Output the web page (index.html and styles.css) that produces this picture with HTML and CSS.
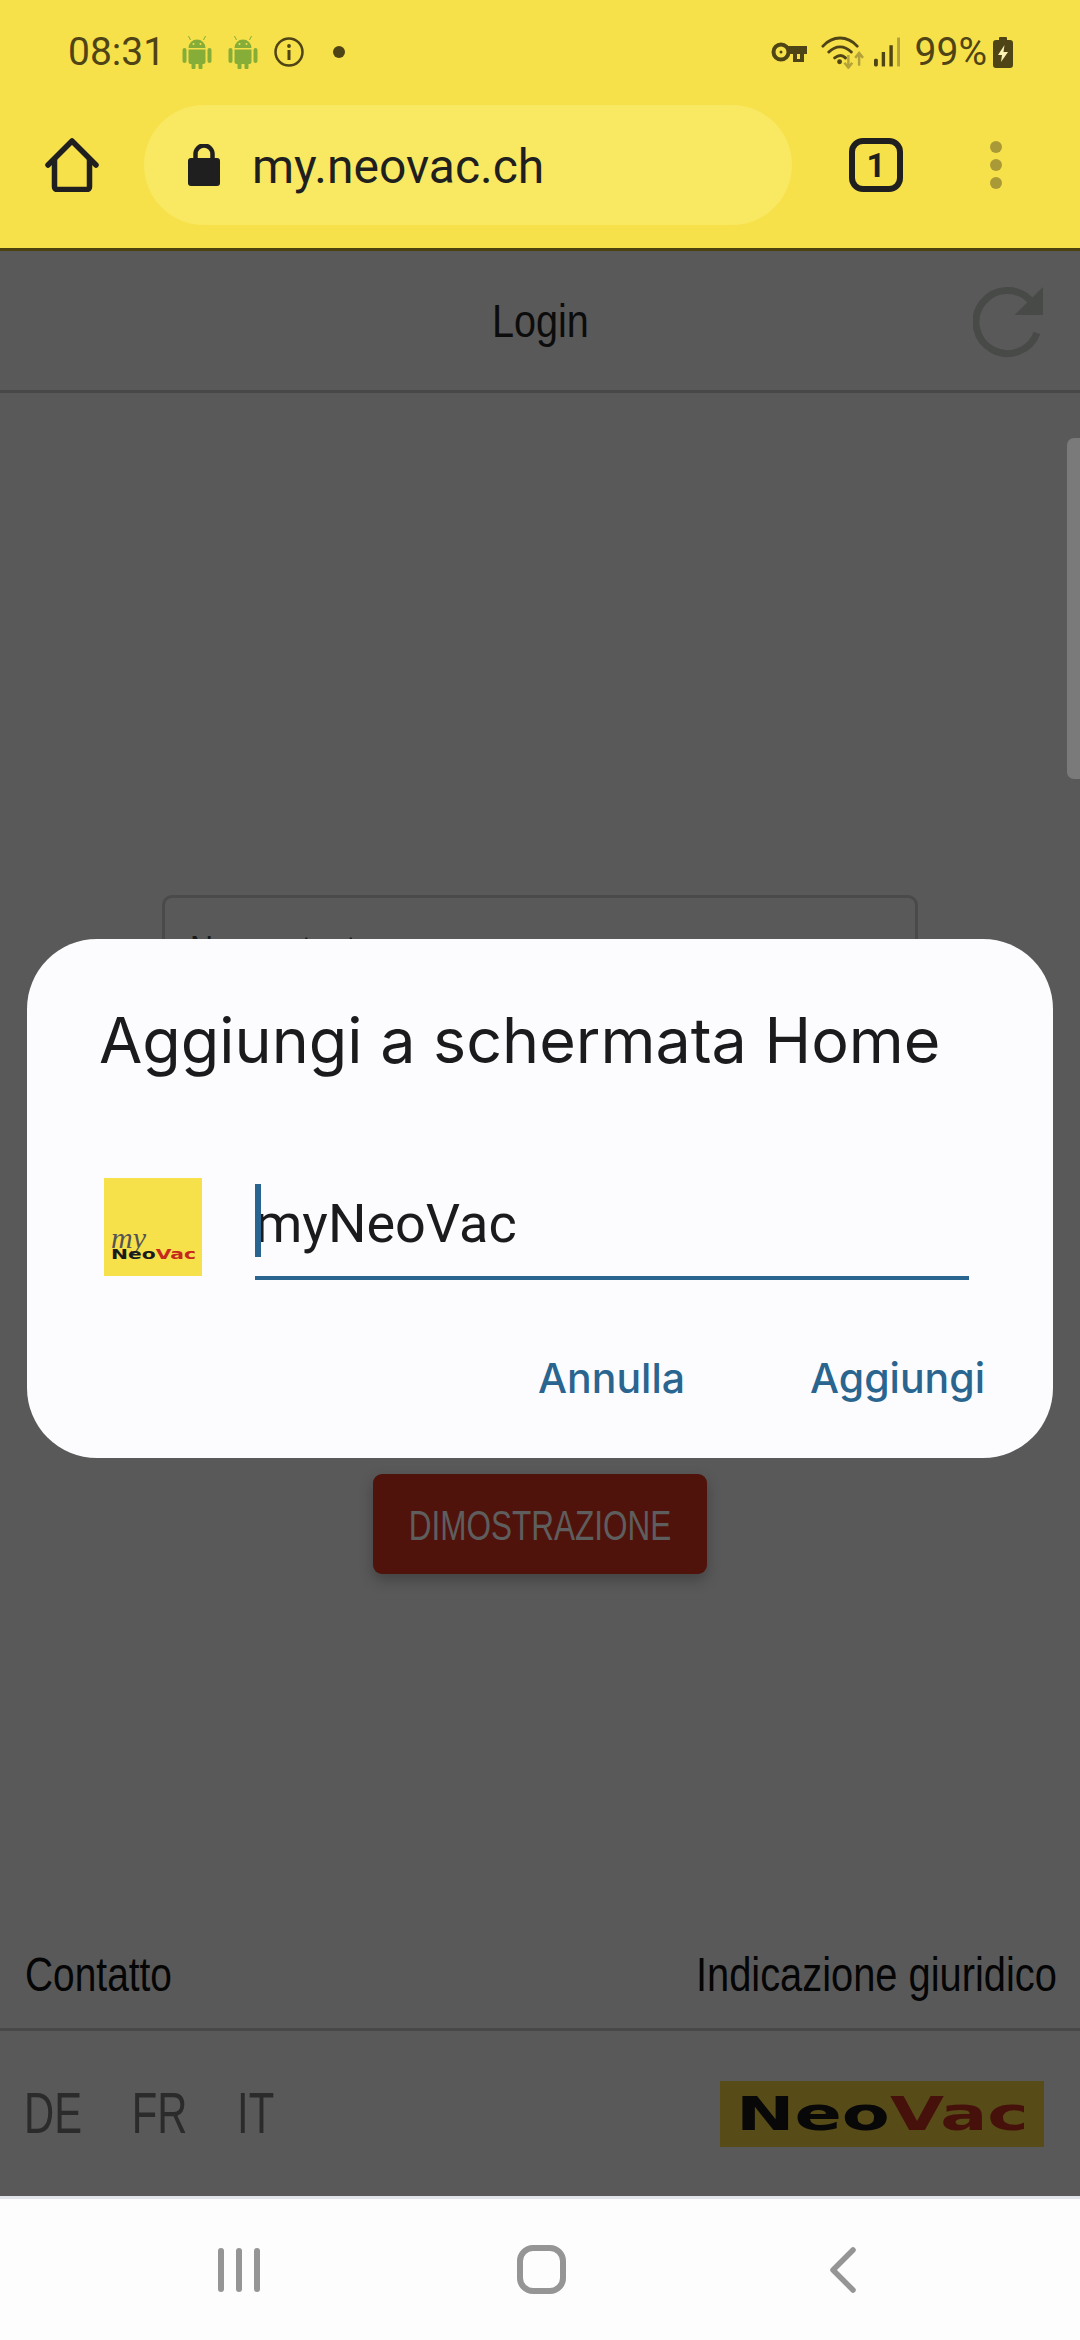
FILE: index.html
```html
<!DOCTYPE html>
<html lang="it">
<head>
<meta charset="UTF-8">
<meta name="viewport" content="width=device-width, initial-scale=1.0">
<title>myNeoVac</title>
<link rel="stylesheet" href="styles.css">
</head>
<body>
<div class="phone">
    <header class="browser">
        <div class="status">
            <div class="status-left">
                <span class="time">08:31</span>
                <svg class="android" viewBox="0 0 29 34"><path d="M8 5 6 1M21 5l2-4" stroke="#86ad38" stroke-width="1"/><path d="M6 13a8.500 8.500 0 0 1 17 0zM6 14.500h17V27a2 2 0 0 1-2 2h-1v3.500a2 2 0 0 1-4 0V29h-3v3.500a2 2 0 0 1-4 0V29H8a2 2 0 0 1-2-2z" fill="#86ad38"/><rect x="0" y="13" width="4" height="15" rx="2" fill="#86ad38"/><rect x="25" y="13" width="4" height="15" rx="2" fill="#86ad38"/><circle cx="11" cy="9" r="1" fill="#f7e14a"/><circle cx="18" cy="9" r="1" fill="#f7e14a"/></svg>
                <svg class="android second" viewBox="0 0 29 34"><path d="M8 5 6 1M21 5l2-4" stroke="#86ad38" stroke-width="1"/><path d="M6 13a8.500 8.500 0 0 1 17 0zM6 14.500h17V27a2 2 0 0 1-2 2h-1v3.500a2 2 0 0 1-4 0V29h-3v3.500a2 2 0 0 1-4 0V29H8a2 2 0 0 1-2-2z" fill="#86ad38"/><rect x="0" y="13" width="4" height="15" rx="2" fill="#86ad38"/><rect x="25" y="13" width="4" height="15" rx="2" fill="#86ad38"/><circle cx="11" cy="9" r="1" fill="#f7e14a"/><circle cx="18" cy="9" r="1" fill="#f7e14a"/></svg>
                <svg class="info" viewBox="0 0 30 30"><circle cx="15" cy="15" r="13.500" fill="none" stroke="#4f4415" stroke-width="2.500"/><rect x="13.500" y="13" width="3" height="10" fill="#4f4415"/><circle cx="15" cy="9" r="1.900" fill="#4f4415"/></svg>
                <span class="dot"></span>
            </div>
            <div class="status-right">
                <svg class="key" viewBox="0 0 36 22"><circle cx="10" cy="11" r="7.500" fill="none" stroke="#4f4415" stroke-width="4"/><circle cx="10" cy="11" r="1.500" fill="#4f4415"/><path d="M17 5h19v8h-3v8H22v-8h-5z" fill="#4f4415"/><path d="M26 13h3v5h-3z" fill="#f7e14a"/></svg>
                <svg class="wifi" viewBox="0 0 44 34"><path d="M2 11C12 0 27 0 37 11M8 17c7-7 16-7 23 0M14 23c4-3 8-3 11 0" fill="none" stroke="#4f4415" stroke-width="3" stroke-linecap="round"/><circle cx="19" cy="27" r="2.500" fill="#4f4415"/><path d="M28 20v12m-4-4 4 5 4-5M39 31V19m-4 4 4-5 4 5" fill="none" stroke="#b3a23a" stroke-width="2.500"/></svg>
                <svg class="signal" viewBox="0 0 27 30"><rect x="0" y="22" width="4" height="8" rx="1.500" fill="#4f4415"/><rect x="8" y="15" width="3.500" height="15" fill="#4f4415"/><rect x="16" y="8" width="3.500" height="22" fill="#4f4415"/><rect x="24" y="0" width="3" height="30" fill="#b3a23a"/></svg>
                <span class="battery-text">99%</span>
                <svg class="battery" viewBox="0 0 20 32"><path d="M6 2a1 1 0 0 1 1-1h6a1 1 0 0 1 1 1v2h3a3 3 0 0 1 3 3v22a3 3 0 0 1-3 3H3a3 3 0 0 1-3-3V7a3 3 0 0 1 3-3h3z" fill="#4f4415"/><path d="M11.500 9 5 19h4l-1 7 7-10h-4.500z" fill="#fbf3b5"/></svg>
            </div>
        </div>
        <div class="toolbar">
            <svg class="home-icon" viewBox="0 0 54 54"><path d="M3 27 27 3l24 24" fill="none" stroke="#1f1f1f" stroke-width="5.500" stroke-linecap="round" stroke-linejoin="round"/><path d="M9.500 21v28a2.500 2.500 0 0 0 2.500 2.500h30a2.500 2.500 0 0 0 2.500-2.500V21" fill="none" stroke="#1f1f1f" stroke-width="5.500"/></svg>
            <div class="address">
                <svg class="lock" viewBox="0 0 32 42"><path d="M7.500 18V10a8.500 8.500 0 0 1 17 0v8" fill="none" stroke="#1f1f1f" stroke-width="4.500"/><rect x="0" y="14" width="32" height="28" rx="3" fill="#1f1f1f"/></svg>
                <span class="url">my.neovac.ch</span>
            </div>
            <div class="tabs">1</div>
            <div class="menu"><span></span><span></span><span></span></div>
        </div>
    </header>

    <main class="page">
        <div class="page-head">
            <span class="page-title">Login</span>
            <svg class="reload" viewBox="0 0 70 71"><path d="M64 46A31.500 31.500 0 1 1 57 13" fill="none" stroke="#484a48" stroke-width="7"/><path d="M70 0v28H41.500z" fill="#484a48"/></svg>
        </div>
        <div class="page-body">
            <div class="login-field"><span class="narrow">Nome utente</span></div>
            <div class="demo-btn"><span class="narrow-btn">DIMOSTRAZIONE</span></div>
        </div>
        <div class="links">
            <span class="link-left">Contatto</span>
            <span class="link-right">Indicazione giuridico</span>
        </div>
        <div class="foot">
            <div class="langs"><span>DE</span><span>FR</span><span>IT</span></div>
            <div class="foot-logo"><span class="logo-word">Neo<b>Vac</b></span></div>
        </div>
    </main>

    <nav class="navbar">
        <svg class="nav-recent" viewBox="0 0 42 44"><rect x="0" y="0" width="6" height="44" rx="3"/><rect x="18" y="0" width="6" height="44" rx="3"/><rect x="36" y="0" width="6" height="44" rx="3"/></svg>
        <div class="nav-home"></div>
        <svg class="nav-back" viewBox="0 0 26 46"><path d="M23 3 3 23l20 20" fill="none" stroke="#959595" stroke-width="5.500" stroke-linecap="round" stroke-linejoin="round"/></svg>
    </nav>

    <div class="scrollbar"></div>

    <div class="dialog">
        <h2>Aggiungi a schermata Home</h2>
        <div class="dialog-row">
            <div class="app-icon">
                <span class="app-my">my</span>
                <span class="app-word">Neo<b>Vac</b></span>
            </div>
            <div class="name-input"><span class="caret"></span>myNeoVac</div>
        </div>
        <div class="dialog-actions">
            <span>Annulla</span>
            <span>Aggiungi</span>
        </div>
    </div>
</div>
</body>
</html>
```
FILE: styles.css
```css
* {
    box-sizing: border-box;
}

body {
    margin: 0;
    padding: 0;
    font-family: Roboto, sans-serif;
    background-color: #595959;
}

.phone {
    position: relative;
    width: 1080px;
    height: 2340px;
    overflow: hidden;
    display: flex;
    flex-direction: column;
}

/* browser chrome */
.browser {
    height: 251px;
    flex-shrink: 0;
    background-color: #f7e14a;
    border-bottom: 3px solid #4c4210;
}

.status {
    height: 90px;
    padding: 14px 67px 0 68px;
    display: flex;
    justify-content: space-between;
    align-items: center;
}

.status-left,
.status-right {
    display: flex;
    align-items: center;
}

.time {
    font-size: 39px;
    color: #4f4415;
    width: 114px;
}

.android {
    width: 30px;
    height: 34px;
}

.second {
    margin-left: 16px;
}

.info {
    width: 30px;
    height: 30px;
    margin-left: 16px;
}

.dot {
    width: 12px;
    height: 12px;
    border-radius: 50%;
    background-color: #4f4415;
    margin-left: 29px;
}

.key {
    width: 36px;
    height: 22px;
}

.wifi {
    width: 43px;
    height: 34px;
    margin-left: 14px;
}

.signal {
    width: 26px;
    height: 30px;
    margin-left: 10px;
}

.battery-text {
    font-size: 39px;
    color: #4f4415;
    margin-left: 15px;
}

.battery {
    width: 20px;
    height: 32px;
    margin-left: 6px;
}

.toolbar {
    height: 158px;
    padding: 15px 0 0 45px;
    display: flex;
    align-items: flex-start;
}

.home-icon {
    width: 54px;
    height: 54px;
    margin-top: 33px;
}

.address {
    width: 648px;
    height: 120px;
    margin-left: 45px;
    padding-left: 44px;
    border-radius: 60px;
    background-color: #f9e862;
    display: flex;
    align-items: center;
}

.lock {
    width: 32px;
    height: 42px;
}

.url {
    font-size: 48px;
    color: #1f1f1f;
    margin-left: 32px;
    padding-top: 2px;
}

.tabs {
    width: 54px;
    height: 54px;
    margin: 33px 0 0 57px;
    border: 6px solid #1f1f1f;
    border-radius: 14px;
    font-size: 33px;
    font-weight: 700;
    color: #1f1f1f;
    display: flex;
    justify-content: center;
    align-items: center;
}

.menu {
    margin: 36px 0 0 87px;
    display: flex;
    flex-direction: column;
    gap: 6px;
}

.menu span {
    width: 12px;
    height: 12px;
    border-radius: 50%;
    background-color: #aa9a37;
}

/* page behind the dialog */
.page {
    flex: 1;
    display: flex;
    flex-direction: column;
    font-family: "Liberation Sans", sans-serif;
}

.page-head {
    height: 142px;
    padding: 3px 37px 0;
    border-bottom: 3px solid #484848;
    display: grid;
    grid-template-columns: 1fr auto 1fr;
    align-items: center;
}

.page-title {
    grid-column: 2;
    font-size: 46px;
    color: #0c0c0c;
    transform: scaleX(0.86);
    margin-top: -3px;
}

.reload {
    grid-column: 3;
    justify-self: end;
    width: 70px;
    height: 71px;
}

.page-body {
    flex: 1;
    padding-top: 502px;
    display: flex;
    flex-direction: column;
    align-items: center;
}

.login-field {
    width: 756px;
    height: 120px;
    padding: 29px 0 0 25px;
    border: 3px solid #4a4a4a;
    border-radius: 10px;
    font-size: 40px;
    line-height: 46px;
    color: #1a1a1a;
}

.narrow {
    display: inline-block;
    transform: scaleX(0.8);
    transform-origin: left center;
}

.demo-btn {
    width: 334px;
    height: 100px;
    margin-top: 459px;
    padding-top: 4px;
    border-radius: 9px;
    background-color: #50130c;
    box-shadow: 0 6px 14px rgba(0, 0, 0, 0.25);
    color: #5e5e5e;
    font-size: 42px;
    display: flex;
    justify-content: center;
    align-items: center;
}

.narrow-btn {
    transform: scaleX(0.75);
    white-space: nowrap;
}

.links {
    height: 90px;
    padding: 6px 23px 0 25px;
    display: flex;
    justify-content: space-between;
    font-size: 48px;
    line-height: 56px;
    color: #050505;
    border-bottom: 3px solid #484848;
}

.link-left {
    transform: scaleX(0.81);
    transform-origin: left center;
}

.link-right {
    transform: scaleX(0.83);
    transform-origin: right center;
}

.foot {
    height: 165px;
    padding: 0 36px 0 24px;
    display: flex;
    justify-content: space-between;
    align-items: center;
}

.langs {
    display: flex;
    gap: 69px;
    margin-top: -2px;
    font-size: 58px;
    color: #2b2b2b;
    transform: scaleX(0.72);
    transform-origin: left center;
}

.foot-logo {
    width: 324px;
    height: 66px;
    background-color: #574b18;
    display: flex;
    justify-content: center;
    align-items: center;
}

.logo-word {
    font-family: "DejaVu Sans", sans-serif;
    font-size: 46px;
    font-weight: 700;
    color: #080808;
    display: inline-block;
    transform: scaleX(1.52);
}

.logo-word b {
    color: #46110b;
}

/* system navigation */
.navbar {
    height: 144px;
    flex-shrink: 0;
    padding: 0 224px 0 218px;
    background-color: #fdfdfe;
    border-top: 3px solid #e1e4ea;
    display: flex;
    align-items: center;
    justify-content: space-between;
}

.nav-recent {
    width: 42px;
    height: 44px;
    fill: #959595;
}

.nav-home {
    width: 49px;
    height: 49px;
    margin-right: 8px;
    border: 6px solid #959595;
    border-radius: 16px;
}

.nav-back {
    width: 26px;
    height: 46px;
}

.scrollbar {
    position: absolute;
    right: 0;
    top: 438px;
    width: 13px;
    height: 341px;
    border-radius: 7px 0 0 7px;
    background-color: #7a7a7a;
}

/* add to home screen dialog */
.dialog {
    position: absolute;
    left: 27px;
    top: 939px;
    width: 1026px;
    height: 519px;
    padding: 63px 68px 0 72px;
    border-radius: 70px;
    background-color: #fcfcfe;
}

.dialog h2 {
    margin: 0;
    font-family: Inter, Roboto, sans-serif;
    font-size: 62.800px;
    font-weight: 400;
    line-height: 76px;
    color: #1b1b1d;
}

.dialog-row {
    margin-top: 100px;
    padding-left: 5px;
    display: flex;
    align-items: flex-start;
}

.app-icon {
    width: 98px;
    height: 98px;
    padding: 0 0 15px 7px;
    background-color: #f7e14a;
    display: flex;
    flex-direction: column;
    justify-content: flex-end;
}

.app-my {
    font-family: "Liberation Serif", serif;
    font-style: italic;
    font-size: 30px;
    line-height: 18px;
    color: #555;
}

.app-word {
    font-family: "DejaVu Sans", sans-serif;
    font-size: 14px;
    line-height: 14px;
    font-weight: 700;
    color: #1b1b1b;
    white-space: nowrap;
    transform: scaleX(1.45);
    transform-origin: left center;
}

.app-word b {
    color: #c5281c;
}

.name-input {
    position: relative;
    width: 714px;
    height: 102px;
    margin-left: 53px;
    padding-top: 14px;
    border-bottom: 4px solid #2a6590;
    font-size: 54px;
    color: #1b1b1d;
}

.caret {
    position: absolute;
    left: 0;
    top: 6px;
    width: 6px;
    height: 73px;
    background-color: #2a6590;
}

.dialog-actions {
    margin-top: 73px;
    display: flex;
    justify-content: flex-end;
    gap: 125px;
    font-family: Inter, Roboto, sans-serif;
    font-size: 41px;
    font-weight: 500;
    color: #2a6590;
}
```
